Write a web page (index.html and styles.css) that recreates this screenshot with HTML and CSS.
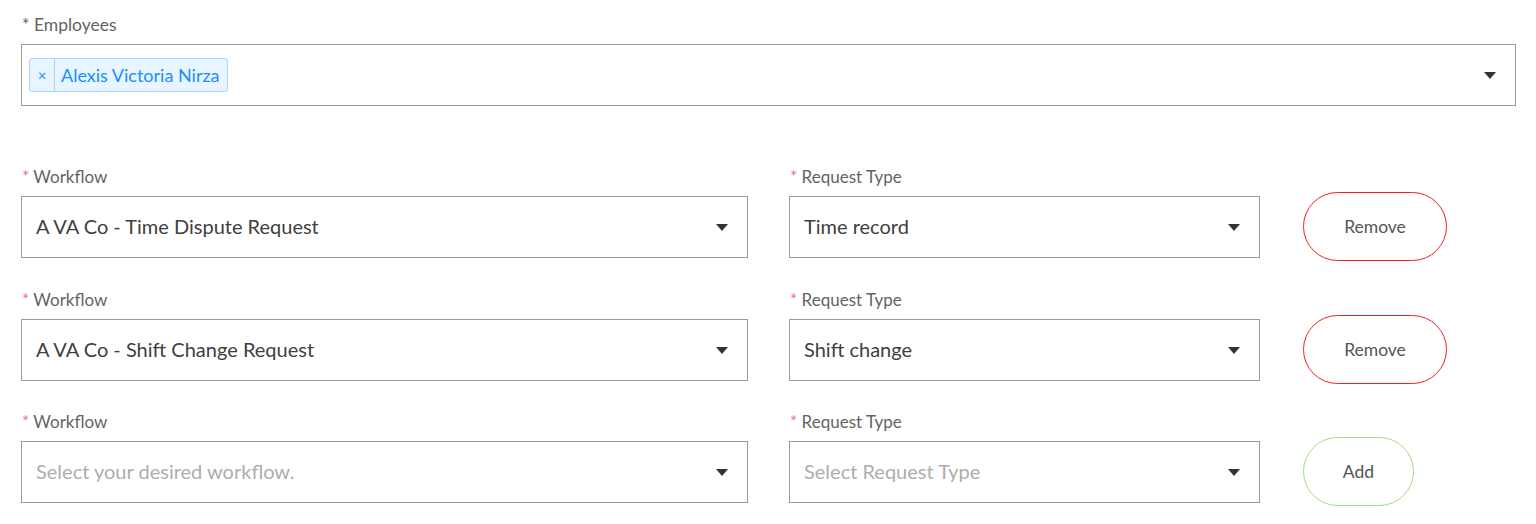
FILE: index.html
```html
<!DOCTYPE html>
<html>
<head>
<meta charset="utf-8">
<link rel="stylesheet" href="styles.css">
</head>
<body>
<div class="page">
  <div class="field emp">
    <div class="label"><span class="star-gray">*</span> Employees</div>
    <div class="box emp-box">
      <div class="tag"><span class="tag-x">×</span><span class="tag-text">Alexis Victoria Nirza</span></div>
      <span class="arrow"></span>
    </div>
  </div>

  <div class="row">
    <div class="field wf">
      <div class="label"><span class="star">*</span> Workflow</div>
      <div class="box"><span class="val">A VA Co - Time Dispute Request</span><span class="arrow"></span></div>
    </div>
    <div class="field rt">
      <div class="label"><span class="star">*</span> Request Type</div>
      <div class="box"><span class="val">Time record</span><span class="arrow"></span></div>
    </div>
    <button class="btn remove">Remove</button>
  </div>

  <div class="row">
    <div class="field wf">
      <div class="label"><span class="star">*</span> Workflow</div>
      <div class="box"><span class="val">A VA Co - Shift Change Request</span><span class="arrow"></span></div>
    </div>
    <div class="field rt">
      <div class="label"><span class="star">*</span> Request Type</div>
      <div class="box"><span class="val">Shift change</span><span class="arrow"></span></div>
    </div>
    <button class="btn remove">Remove</button>
  </div>

  <div class="row">
    <div class="field wf">
      <div class="label"><span class="star">*</span> Workflow</div>
      <div class="box"><span class="val ph">Select your desired workflow.</span><span class="arrow"></span></div>
    </div>
    <div class="field rt">
      <div class="label"><span class="star">*</span> Request Type</div>
      <div class="box"><span class="val ph">Select Request Type</span><span class="arrow"></span></div>
    </div>
    <button class="btn add">Add</button>
  </div>
</div>
</body>
</html>
```

FILE: styles.css
```css
html, body {
  margin: 0;
  padding: 0;
  background: #fff;
}
body {
  font-family: Lato, "Open Sans", sans-serif;
  color: #333;
}
.page {
  padding: 14px 20px 0 21px;
}
.label {
  font-size: 17px;
  line-height: 22px;
  color: #636363;
  margin-bottom: 8px;
  padding-left: 1px;
}
.emp .label { font-size: 17.5px; }
.star { color: #f27474; }
.star-gray { color: #636363; }
.box {
  box-sizing: border-box;
  height: 62px;
  border: 1px solid #9a9a9a;
  display: flex;
  align-items: center;
  padding: 0 19px 0 14px;
}
.emp-box {
  width: 1495px;
  padding-left: 7px;
}
.val {
  flex: 1;
  font-size: 20px;
  line-height: 24px;
  padding-bottom: 2px;
  color: #404040;
}
.val.ph { color: #adadad; }
.arrow {
  width: 0;
  height: 0;
  border-left: 6.5px solid transparent;
  border-right: 6.5px solid transparent;
  border-top: 7px solid #333;
  margin-left: auto;
}
.tag {
  display: flex;
  align-items: stretch;
  height: 34px;
  box-sizing: border-box;
  border: 1px solid #a9d4fb;
  background: #e8f4ff;
  border-radius: 3px;
  color: #1890ff;
}
.tag-x {
  width: 24px;
  border-right: 1px solid #a9d4fb;
  display: flex;
  align-items: center;
  justify-content: center;
  font-size: 15px;
}
.tag-text {
  display: flex;
  align-items: center;
  padding: 0 7px 0 6px;
  font-size: 18px;
}
.emp { margin-bottom: 60px; }
.row {
  display: flex;
  align-items: flex-end;
  margin-bottom: 31px;
}
.row:nth-child(3) { margin-bottom: 30px; }
.wf { width: 727px; }
.rt { width: 471px; margin-left: 41px; }
.btn {
  box-sizing: border-box;
  height: 69px;
  margin-left: 43px;
  margin-bottom: -3px;
  background: #fff;
  border-radius: 35px;
  font-family: inherit;
  font-size: 17.5px;
  color: #555;
  cursor: pointer;
}
.remove { width: 144px; border: 1px solid #ee2222; }
.add { width: 111px; border: 1px solid #a3dc84; }
```
